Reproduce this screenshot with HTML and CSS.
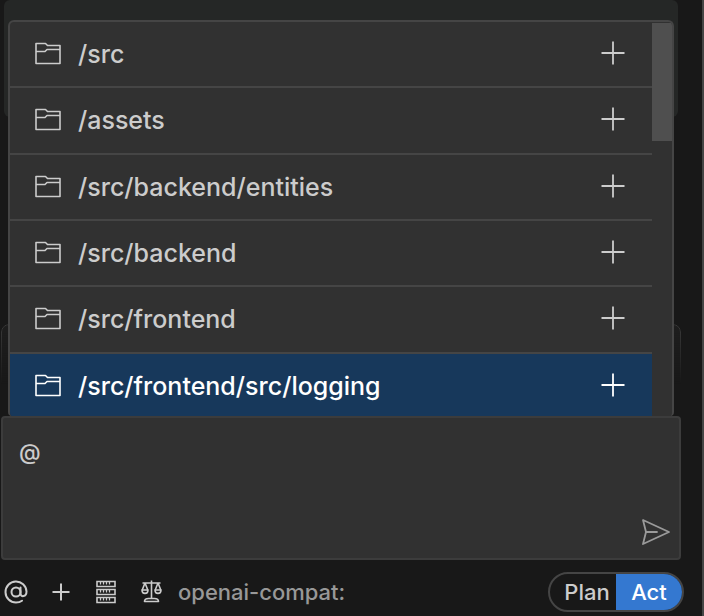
FILE: index.html
```html
<!DOCTYPE html>
<html lang="en">
<head>
    <meta charset="UTF-8">
    <meta name="viewport" content="width=device-width, initial-scale=1.0">
    <title>Chat</title>
    <link rel="stylesheet" href="styles.css">
</head>
<body>

    <svg class="sprite" aria-hidden="true">
        <symbol id="folder" viewBox="0 0 26 24">
            <path d="M1 1.500h9.500l2 2H25v18H1z M1 9.500h9l2-2h13" fill="none" stroke="currentColor" stroke-width="1.600" stroke-linejoin="round"/>
        </symbol>
        <symbol id="add" viewBox="0 0 24 24">
            <path d="M12 .5v23M.5 12h23" fill="none" stroke="currentColor" stroke-width="1.800"/>
        </symbol>
    </svg>

    <div class="panel">
        <div class="messages">
            <div class="message"></div>
            <div class="task-bar"></div>
        </div>

        <div class="composer">
            <div class="context-menu">
                <div class="context-list">
                    <button class="context-item" type="button">
                        <svg class="folder-icon"><use href="#folder"/></svg>
                        <span>/src</span>
                        <svg class="add-icon"><use href="#add"/></svg>
                    </button>
                    <button class="context-item" type="button">
                        <svg class="folder-icon"><use href="#folder"/></svg>
                        <span>/assets</span>
                        <svg class="add-icon"><use href="#add"/></svg>
                    </button>
                    <button class="context-item" type="button">
                        <svg class="folder-icon"><use href="#folder"/></svg>
                        <span>/src/backend/entities</span>
                        <svg class="add-icon"><use href="#add"/></svg>
                    </button>
                    <button class="context-item" type="button">
                        <svg class="folder-icon"><use href="#folder"/></svg>
                        <span>/src/backend</span>
                        <svg class="add-icon"><use href="#add"/></svg>
                    </button>
                    <button class="context-item" type="button">
                        <svg class="folder-icon"><use href="#folder"/></svg>
                        <span>/src/frontend</span>
                        <svg class="add-icon"><use href="#add"/></svg>
                    </button>
                    <button class="context-item selected" type="button">
                        <svg class="folder-icon"><use href="#folder"/></svg>
                        <span>/src/frontend/src/logging</span>
                        <svg class="add-icon"><use href="#add"/></svg>
                    </button>
                </div>
                <div class="scrollbar"><div class="scroll-thumb"></div></div>
            </div>

            <textarea class="prompt" aria-label="Message">@</textarea>
            <button class="send" type="button" aria-label="Send">
                <svg viewBox="0 0 30 28" fill="none" stroke="currentColor" stroke-width="1.800" stroke-linejoin="round" stroke-linecap="round">
                    <path d="M2 2l26 12L2 26l3-12zM5 14h11"/>
                </svg>
            </button>
        </div>

        <div class="toolbar">
            <button class="tool" type="button" aria-label="Add context">
                <svg viewBox="0 0 24 24" fill="none" stroke="currentColor" stroke-width="2" stroke-linecap="round">
                    <circle cx="12" cy="12" r="4.500"/>
                    <path d="M16.500 7.500v6c0 4 6 3.500 6-2A10.500 10.500 0 1 0 12 22.500c2.500 0 4.500-.7 6-1.800"/>
                </svg>
            </button>
            <button class="tool" type="button" aria-label="Add images">
                <svg viewBox="0 0 24 24" fill="none" stroke="currentColor" stroke-width="2">
                    <path d="M12 3.500v17M3.500 12h17"/>
                </svg>
            </button>
            <button class="tool" type="button" aria-label="MCP servers">
                <svg viewBox="0 0 24 24" fill="none" stroke="currentColor" stroke-width="1.600">
                    <path d="M3 1.500h18v5H3zM3 9.500h18v5H3zM3 17.500h18v5H3z"/>
                    <path d="M6.500 2v2.500M9.500 2v2.500M12.500 2v2.500M15.500 2v2.500M6.500 10v2.500M9.500 10v2.500M12.500 10v2.500M15.500 10v2.500M6.500 18v2.500M9.500 18v2.500M12.500 18v2.500M15.500 18v2.500" stroke-width="1.300"/>
                </svg>
            </button>
            <button class="tool" type="button" aria-label="Rules">
                <svg viewBox="0 0 24 24" fill="none" stroke="currentColor" stroke-width="1.600" stroke-linejoin="round">
                    <path d="M12.500 .5v18M3.500 3h18M6 3L3.200 10M6 3L8.800 10M19 3L16.200 10M19 3L21.800 10"/>
                    <path d="M3 10h6c0 4.500-6 4.500-6 0zM16 10h6c0 4.500-6 4.500-6 0zM5.500 21.500c0-2 2-3 4-3h6c2 0 4 1 4 3z"/>
                </svg>
            </button>
            <button class="model" type="button">openai-compat:</button>
            <div class="mode-switch">
                <button type="button">Plan</button>
                <button class="active" type="button">Act</button>
            </div>
        </div>
    </div>

</body>
</html>
```
FILE: styles.css
```css
/* General Styles */
* {
    box-sizing: border-box;
}

body {
    font-family: Inter, 'Liberation Sans', sans-serif;
    font-size: 25px;
    font-weight: 450;
    line-height: 32px;
    background-color: #181818;
    color: #cccccc;
    margin: 0;
}

button {
    font: inherit;
    color: inherit;
    background: none;
    border: none;
    padding: 0;
    cursor: pointer;
}

svg {
    display: block;
    flex: none;
}

.sprite {
    display: none;
}

.panel {
    display: flex;
    flex-direction: column;
    min-height: 100vh;
    border-right: 2px solid #454545;
}

/* Messages behind the menu */
.messages {
    flex: 1;
    display: flex;
    flex-direction: column;
    justify-content: space-between;
    padding: 0 21px 0 1px;
}

.message {
    height: 117px;
    margin: 0 3px;
    background-color: #252726;
    border-radius: 6px;
}

.task-bar {
    height: 92px;
    border: 1px solid #3a3a3a;
    border-radius: 8px;
    background-color: #1e1e1e;
    -webkit-mask-image: linear-gradient(#000, transparent 60px);
    mask-image: linear-gradient(#000, transparent 60px);
}

/* Composer */
.composer {
    position: relative;
    display: flex;
    height: 144px;
    margin: 0 21px 0 1px;
    padding: 18px 8px 12px 16px;
    background-color: #313131;
    border: 2px solid #3c3c3c;
    border-radius: 4px;
}

.prompt {
    flex: 1;
    font: inherit;
    font-size: 22px;
    font-weight: 500;
    color: inherit;
    background: none;
    border: none;
    outline: none;
    padding: 0;
    resize: none;
}

.send {
    align-self: flex-end;
    color: #9a9a9a;
}

.send svg {
    width: 30px;
    height: 28px;
}

/* Context Menu */
.context-menu {
    position: absolute;
    left: 5px;
    right: 5px;
    bottom: calc(100% + 2px);
    height: 396px;
    display: flex;
    overflow: hidden;
    background-color: #313131;
    border: 2px solid #454545;
    border-bottom: none;
    border-radius: 6px 6px 4px 4px;
}

.context-list {
    flex: 1;
    height: 398px;
    display: flex;
    flex-direction: column;
}

.context-item {
    flex: 1;
    display: flex;
    align-items: center;
    gap: 17px;
    padding: 0 27px 0 25px;
    border-bottom: 2px solid #454545;
    text-align: left;
}

.context-item span {
    flex: 1;
}

.context-item.selected {
    background-color: #17385b;
    color: #ffffff;
}

.folder-icon {
    width: 26px;
    height: 24px;
}

.add-icon {
    width: 24px;
    height: 26px;
    padding-bottom: 2px;
}

.scrollbar {
    width: 20px;
    padding-top: 1px;
}

.scroll-thumb {
    height: 118px;
    background-color: #4f4f4f;
}

/* Toolbar */
.toolbar {
    display: flex;
    align-items: center;
    height: 56px;
    padding: 8px 18px 0 4px;
    font-size: 22px;
}

.tool {
    margin-right: 21px;
}

.tool svg {
    width: 24px;
    height: 24px;
}

.model {
    margin: 0 auto 0 -6px;
    color: #989898;
}

.mode-switch {
    display: flex;
    height: 40px;
    overflow: hidden;
    border: 2px solid #454545;
    border-radius: 20px;
}

.mode-switch button {
    width: 66px;
    padding-left: 8px;
}

.mode-switch .active {
    padding: 0;
    background-color: #3478d0;
    color: #ffffff;
}
```
